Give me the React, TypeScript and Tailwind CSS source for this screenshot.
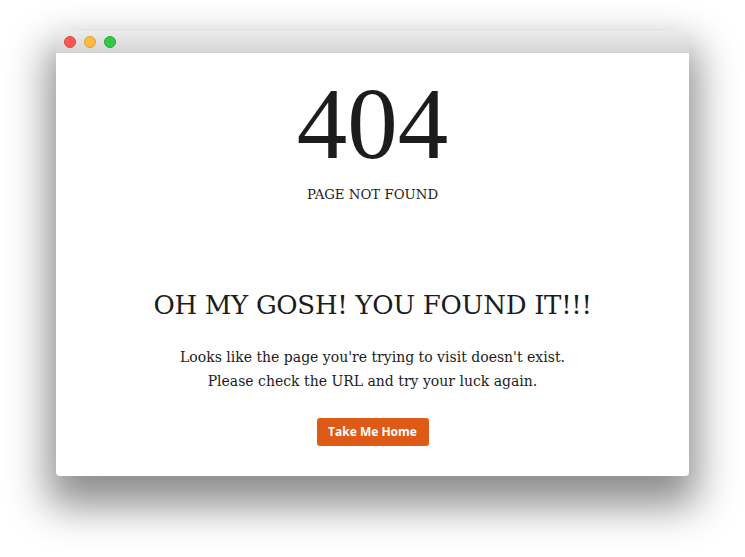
export default function App() {
  return (
    <div className="min-h-[557px] w-full bg-white pt-[31px]">
      <div className="mx-auto w-[633px] h-[445px] rounded-[4px] bg-white shadow-[0_22px_40px_8px_rgba(0,0,0,0.45)] overflow-hidden flex flex-col">
        {/* title bar */}
        <div className="h-[22px] bg-gradient-to-b from-[#ececec] to-[#d6d6d6] border-b border-[#cfcfcf] flex items-center gap-[8px] pl-[8px]">
          <span className="w-[12px] h-[12px] rounded-full bg-[#fc5753] border border-[#df4744]" />
          <span className="w-[12px] h-[12px] rounded-full bg-[#fdbc40] border border-[#de9f34]" />
          <span className="w-[12px] h-[12px] rounded-full bg-[#33c748] border border-[#27aa35]" />
        </div>

        <div className="flex-1 flex flex-col items-center text-[#1c1c1c] font-['DejaVu_Serif',serif]">
          <h1 className="mt-[11px] text-[101px] leading-[120px] font-normal font-['Liberation_Serif',serif]">404</h1>
          <p className="mt-[1px] text-[13.3px] leading-[20px]">PAGE NOT FOUND</p>
          <h2 className="mt-[83px] text-[26px] leading-[34px] tracking-[-0.3px] font-normal">OH MY GOSH! YOU FOUND IT!!!</h2>
          <p className="mt-[23px] text-[14px] leading-[24px] text-center">
            Looks like the page you're trying to visit doesn't exist.
            <br />
            Please check the URL and try your luck again.
          </p>
          <button className="mt-[25px] w-[112px] h-[28px] rounded-[3px] bg-[#e05a17] text-white text-[12px] font-bold font-['Open_Sans',sans-serif]">
            Take Me Home
          </button>
        </div>
      </div>
    </div>
  );
}
